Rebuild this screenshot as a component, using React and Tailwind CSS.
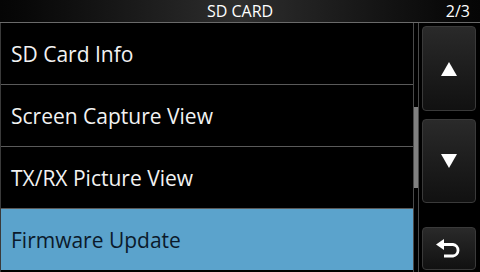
import React from "react";

const items = ["SD Card Info", "Screen Capture View", "TX/RX Picture View", "Firmware Update"];

const NavButton = ({ className = "", children }) => (
  <div
    className={`flex items-center justify-center rounded-[4px] border border-[#3a3a3a] bg-gradient-to-b from-[#2a2a2a] to-[#111] ${className}`}
  >
    {children}
  </div>
);

export default function App() {
  return (
    <div
      className="flex h-[272px] w-[480px] flex-col overflow-hidden bg-black text-white"
      style={{ fontFamily: '"Open Sans", "Noto Sans", sans-serif' }}
    >
      {/* title bar */}
      <div className="relative flex h-[23px] shrink-0 items-center justify-center border-b border-[#6a6a6a] bg-gradient-to-r from-[#050505] via-[#2e2e2e] to-[#050505]">
        <span className="text-[16px] leading-none">SD CARD</span>
        <span className="absolute right-[10px] top-[3px] text-[16px] leading-none">2/3</span>
      </div>

      <div className="flex flex-1">
        {/* list */}
        <div className="flex w-[413px] flex-col border-l border-[#3a3a3a]">
          {items.map((label, i) => {
            const active = i === items.length - 1;
            return (
              <div
                key={label}
                className={`flex items-center pl-[10px] pt-[3px] text-[21px] text-[#f2f2f2] ${
                  active ? "mb-[2px] h-[61px] bg-[#5ba3cc] !text-[#0b1a2b]" : "h-[62px] border-b border-[#5a5a5a]"
                }`}
              >
                {label}
              </div>
            );
          })}
        </div>

        {/* scrollbar */}
        <div className="flex w-[6px] flex-col border-x border-[#4a4a4a] pt-[84px]">
          <div className="h-[81px] w-full bg-[#808080]" />
        </div>

        {/* buttons */}
        <div className="flex flex-1 flex-col gap-[8px] pl-[3px] pr-[4px] pt-[3px] pb-[2px]">
          <NavButton className="h-[85px]">
            <svg width="16" height="14" viewBox="0 0 16 14">
              <polygon points="8,0 16,14 0,14" fill="#fff" />
            </svg>
          </NavButton>
          <NavButton className="h-[84px]">
            <svg width="16" height="14" viewBox="0 0 16 14">
              <polygon points="0,0 16,0 8,14" fill="#fff" />
            </svg>
          </NavButton>
          <NavButton className="mt-[16px] h-[43px]">
            <svg width="26" height="19" viewBox="0 0 26 19">
              <path d="M5 5.5 H17 A5.8 5.8 0 0 1 17 17 H8" fill="none" stroke="#fff" strokeWidth="2.8" />
              <polygon points="0,5.5 8,0 8,11" fill="#fff" />
            </svg>
          </NavButton>
        </div>
      </div>
    </div>
  );
}
